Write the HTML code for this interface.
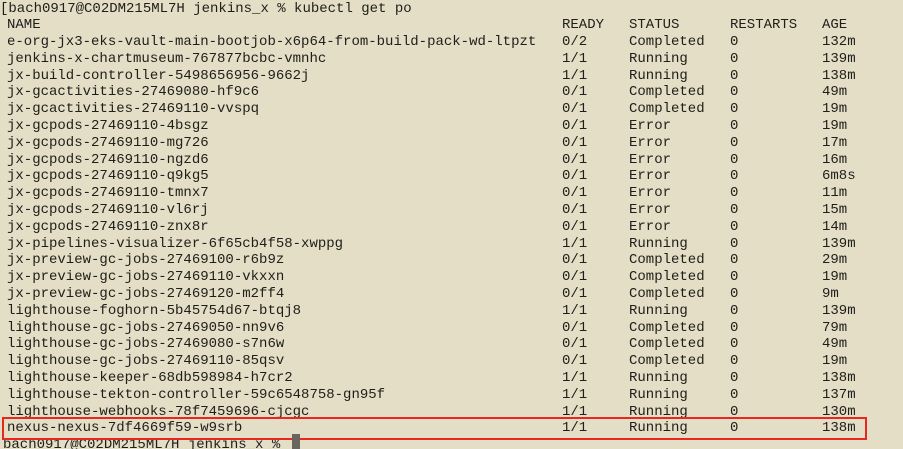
<!DOCTYPE html>
<html><head><style>
html,body{margin:0;padding:0;width:903px;height:449px;overflow:hidden;background:#e4dec6;}
body{position:relative;font-family:"Liberation Mono",monospace;font-size:14px;color:#1e1e1a;}
.r{position:absolute;left:0;height:17px;line-height:17px;white-space:pre;margin-top:1px;}
.r span{position:absolute;top:0;}
.a{left:7px}.b{left:562px}.c{left:629px}.d{left:730px}.e{left:822px}
#box{position:absolute;left:2px;top:417px;width:861px;height:19px;border:2px solid #e8281e;}
#cur{position:absolute;left:292px;top:434px;width:8px;height:15px;background:#6a6560;}
</style></head><body>
<div class="r" style="top:0"><span style="left:0">[bach0917@C02DM215ML7H jenkins_x % kubectl get po</span></div>
<div class="r" style="top:16px"><span class="a">NAME</span><span class="b">READY</span><span class="c">STATUS</span><span class="d">RESTARTS</span><span class="e">AGE</span></div>
<div class="r" style="top:33px"><span class="a">e-org-jx3-eks-vault-main-bootjob-x6p64-from-build-pack-wd-ltpzt</span><span class="b">0/2</span><span class="c">Completed</span><span class="d">0</span><span class="e">132m</span></div>
<div class="r" style="top:50px"><span class="a">jenkins-x-chartmuseum-767877bcbc-vmnhc</span><span class="b">1/1</span><span class="c">Running</span><span class="d">0</span><span class="e">139m</span></div>
<div class="r" style="top:67px"><span class="a">jx-build-controller-5498656956-9662j</span><span class="b">1/1</span><span class="c">Running</span><span class="d">0</span><span class="e">138m</span></div>
<div class="r" style="top:83px"><span class="a">jx-gcactivities-27469080-hf9c6</span><span class="b">0/1</span><span class="c">Completed</span><span class="d">0</span><span class="e">49m</span></div>
<div class="r" style="top:100px"><span class="a">jx-gcactivities-27469110-vvspq</span><span class="b">0/1</span><span class="c">Completed</span><span class="d">0</span><span class="e">19m</span></div>
<div class="r" style="top:117px"><span class="a">jx-gcpods-27469110-4bsgz</span><span class="b">0/1</span><span class="c">Error</span><span class="d">0</span><span class="e">19m</span></div>
<div class="r" style="top:134px"><span class="a">jx-gcpods-27469110-mg726</span><span class="b">0/1</span><span class="c">Error</span><span class="d">0</span><span class="e">17m</span></div>
<div class="r" style="top:151px"><span class="a">jx-gcpods-27469110-ngzd6</span><span class="b">0/1</span><span class="c">Error</span><span class="d">0</span><span class="e">16m</span></div>
<div class="r" style="top:167px"><span class="a">jx-gcpods-27469110-q9kg5</span><span class="b">0/1</span><span class="c">Error</span><span class="d">0</span><span class="e">6m8s</span></div>
<div class="r" style="top:184px"><span class="a">jx-gcpods-27469110-tmnx7</span><span class="b">0/1</span><span class="c">Error</span><span class="d">0</span><span class="e">11m</span></div>
<div class="r" style="top:201px"><span class="a">jx-gcpods-27469110-vl6rj</span><span class="b">0/1</span><span class="c">Error</span><span class="d">0</span><span class="e">15m</span></div>
<div class="r" style="top:218px"><span class="a">jx-gcpods-27469110-znx8r</span><span class="b">0/1</span><span class="c">Error</span><span class="d">0</span><span class="e">14m</span></div>
<div class="r" style="top:235px"><span class="a">jx-pipelines-visualizer-6f65cb4f58-xwppg</span><span class="b">1/1</span><span class="c">Running</span><span class="d">0</span><span class="e">139m</span></div>
<div class="r" style="top:251px"><span class="a">jx-preview-gc-jobs-27469100-r6b9z</span><span class="b">0/1</span><span class="c">Completed</span><span class="d">0</span><span class="e">29m</span></div>
<div class="r" style="top:268px"><span class="a">jx-preview-gc-jobs-27469110-vkxxn</span><span class="b">0/1</span><span class="c">Completed</span><span class="d">0</span><span class="e">19m</span></div>
<div class="r" style="top:285px"><span class="a">jx-preview-gc-jobs-27469120-m2ff4</span><span class="b">0/1</span><span class="c">Completed</span><span class="d">0</span><span class="e">9m</span></div>
<div class="r" style="top:302px"><span class="a">lighthouse-foghorn-5b45754d67-btqj8</span><span class="b">1/1</span><span class="c">Running</span><span class="d">0</span><span class="e">139m</span></div>
<div class="r" style="top:319px"><span class="a">lighthouse-gc-jobs-27469050-nn9v6</span><span class="b">0/1</span><span class="c">Completed</span><span class="d">0</span><span class="e">79m</span></div>
<div class="r" style="top:335px"><span class="a">lighthouse-gc-jobs-27469080-s7n6w</span><span class="b">0/1</span><span class="c">Completed</span><span class="d">0</span><span class="e">49m</span></div>
<div class="r" style="top:352px"><span class="a">lighthouse-gc-jobs-27469110-85qsv</span><span class="b">0/1</span><span class="c">Completed</span><span class="d">0</span><span class="e">19m</span></div>
<div class="r" style="top:369px"><span class="a">lighthouse-keeper-68db598984-h7cr2</span><span class="b">1/1</span><span class="c">Running</span><span class="d">0</span><span class="e">138m</span></div>
<div class="r" style="top:386px"><span class="a">lighthouse-tekton-controller-59c6548758-gn95f</span><span class="b">1/1</span><span class="c">Running</span><span class="d">0</span><span class="e">137m</span></div>
<div class="r" style="top:403px"><span class="a">lighthouse-webhooks-78f7459696-cjcgc</span><span class="b">1/1</span><span class="c">Running</span><span class="d">0</span><span class="e">130m</span></div>
<div class="r" style="top:419px"><span class="a">nexus-nexus-7df4669f59-w9srb</span><span class="b">1/1</span><span class="c">Running</span><span class="d">0</span><span class="e">138m</span></div>
<div class="r" style="top:436px"><span style="left:3px">bach0917@C02DM215ML7H jenkins_x %</span></div>
<div id="box"></div>
<div id="cur"></div>
</body></html>
